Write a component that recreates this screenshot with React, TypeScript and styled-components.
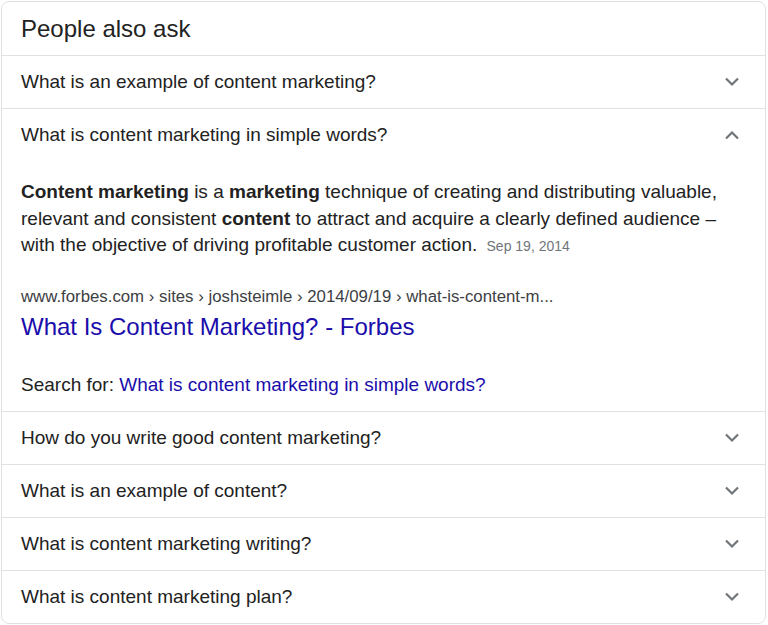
import React from "react";
import styled, { createGlobalStyle } from "styled-components";

const GlobalStyle = createGlobalStyle`
  body {
    margin: 0;
    background: #ffffff;
    font-family: "Liberation Sans", Arial, sans-serif;
  }
`;

const questionsBefore = ["What is an example of content marketing?"];
const questionsAfter = [
  "How do you write good content marketing?",
  "What is an example of content?",
  "What is content marketing writing?",
  "What is content marketing plan?",
];

const Chevron: React.FC<{ up?: boolean }> = ({ up }) => (
  <ChevronSvg width="16" height="10" viewBox="0 0 16 10">
    <path
      d={up ? "M2 8.5 L8 2.5 L14 8.5" : "M2 1.5 L8 7.5 L14 1.5"}
      fill="none"
      stroke="#70757a"
      strokeWidth="2.2"
    />
  </ChevronSvg>
);

const QuestionRow: React.FC<{ text: string; open?: boolean }> = ({
  text,
  open,
}) => (
  <Row>
    <QuestionText>{text}</QuestionText>
    <Chevron up={open} />
  </Row>
);

export default function App() {
  return (
    <Page>
      <GlobalStyle />
      <Card>
        <Header>People also ask</Header>
        {questionsBefore.map((q) => (
          <QuestionRow key={q} text={q} />
        ))}
        <Expanded>
          <QuestionRow text="What is content marketing in simple words?" open />
          <Answer>
            <Paragraph>
              <b>Content marketing</b> is a <b>marketing</b> technique of
              creating and distributing valuable, relevant and consistent{" "}
              <b>content</b> to attract and acquire a clearly defined audience
              – with the objective of driving profitable customer action.{" "}
              <DateText>Sep 19, 2014</DateText>
            </Paragraph>
            <Cite>
              www.forbes.com › sites › joshsteimle › 2014/09/19 ›
              what-is-content-m...
            </Cite>
            <TitleLink href="#">What Is Content Marketing? - Forbes</TitleLink>
            <SearchFor>
              Search for:{" "}
              <SearchLink href="#">
                What is content marketing in simple words?
              </SearchLink>
            </SearchFor>
          </Answer>
        </Expanded>
        {questionsAfter.map((q) => (
          <QuestionRow key={q} text={q} />
        ))}
      </Card>
    </Page>
  );
}

const Page = styled.div`
  padding: 1px;
`;

const Card = styled.div`
  width: 765px;
  box-sizing: border-box;
  border: 1px solid #dfe1e5;
  border-radius: 8px;
  background: #fff;
  overflow: hidden;
`;

const Header = styled.div`
  height: 53px;
  display: flex;
  align-items: center;
  padding: 0 19px;
  font-size: 24px;
  color: #222;
`;

const Row = styled.div`
  height: 52px;
  display: flex;
  align-items: center;
  justify-content: space-between;
  padding: 0 25px 0 19px;
  border-top: 1px solid #dfe1e5;
`;

const QuestionText = styled.span`
  font-size: 19px;
  color: #222;
`;

const ChevronSvg = styled.svg`
  display: block;
`;

const Expanded = styled.div``;

const Answer = styled.div`
  padding: 18px 30px 13px 19px;
  color: #222;
`;

const Paragraph = styled.div`
  font-size: 19px;
  line-height: 26.6px;
`;

const DateText = styled.span`
  font-size: 14px;
  color: #70757a;
  margin-left: 4px;
`;

const Cite = styled.div`
  margin-top: 26px;
  font-size: 16.8px;
  line-height: 22px;
  color: #3c4043;
  white-space: nowrap;
`;

const TitleLink = styled.a`
  display: block;
  margin-top: 4px;
  font-size: 24px;
  line-height: 30px;
  color: #1a0dab;
  text-decoration: none;
`;

const SearchFor = styled.div`
  margin-top: 30px;
  font-size: 19px;
  line-height: 26.6px;
  color: #222;
`;

const SearchLink = styled.a`
  color: #1a0dab;
  text-decoration: none;
`;
